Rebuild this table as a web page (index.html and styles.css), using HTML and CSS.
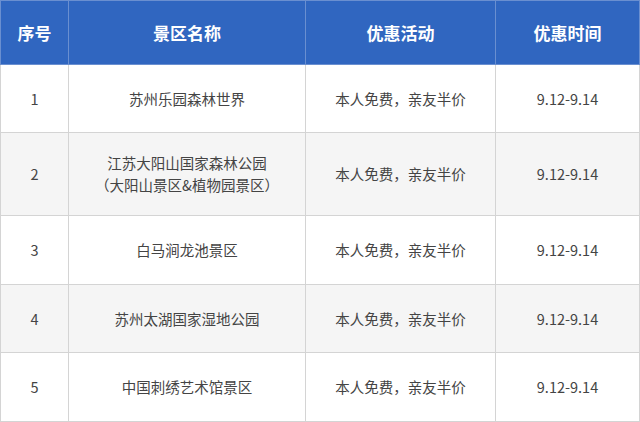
FILE: index.html
```html
<!DOCTYPE html>
<html lang="zh-CN">
<head>
<meta charset="utf-8">
<link rel="stylesheet" href="styles.css">
</head>
<body>
<table class="tbl">
  <colgroup>
    <col class="c1"><col class="c2"><col class="c3"><col class="c4">
  </colgroup>
  <thead>
    <tr class="head">
      <th>序号</th><th>景区名称</th><th>优惠活动</th><th>优惠时间</th>
    </tr>
  </thead>
  <tbody>
    <tr class="r1"><td>1</td><td>苏州乐园森林世界</td><td>本人免费，亲友半价</td><td>9.12-9.14</td></tr>
    <tr class="r2 alt"><td>2</td><td>江苏大阳山国家森林公园<br>（大阳山景区&amp;植物园景区）</td><td>本人免费，亲友半价</td><td>9.12-9.14</td></tr>
    <tr class="r3"><td>3</td><td>白马涧龙池景区</td><td>本人免费，亲友半价</td><td>9.12-9.14</td></tr>
    <tr class="r4 alt"><td>4</td><td>苏州太湖国家湿地公园</td><td>本人免费，亲友半价</td><td>9.12-9.14</td></tr>
    <tr class="r5"><td>5</td><td>中国刺绣艺术馆景区</td><td>本人免费，亲友半价</td><td>9.12-9.14</td></tr>
  </tbody>
</table>
</body>
</html>
```
FILE: styles.css
```css
html, body {
  margin: 0;
  padding: 0;
  background: #ffffff;
}
.tbl {
  width: 639px;
  height: 422px;
  border-collapse: collapse;
  table-layout: fixed;
  font-family: "Noto Sans CJK SC", "Noto Sans", sans-serif;
  color: #444444;
}
.c1 { width: 68px; }
.c2 { width: 237px; }
.c3 { width: 190px; }
.c4 { width: 144px; }
.tbl th, .tbl td {
  border: 1px solid #d4d4d4;
  text-align: center;
  vertical-align: middle;
  padding: 0;
}
.head th {
  background: #3066c0;
  color: #ffffff;
  font-size: 17px;
  font-weight: 700;
  height: 63px;
  border-color: #6a8fd0;
}
.tbl td {
  font-size: 14.5px;
  line-height: 22px;
}
.alt td { background: #f5f5f5; }
.r1 td { height: 67px; }
.r2 td { height: 82px; }
.r3 td { height: 68px; }
.r4 td { height: 67px; }
.r5 td { height: 68px; }
```
